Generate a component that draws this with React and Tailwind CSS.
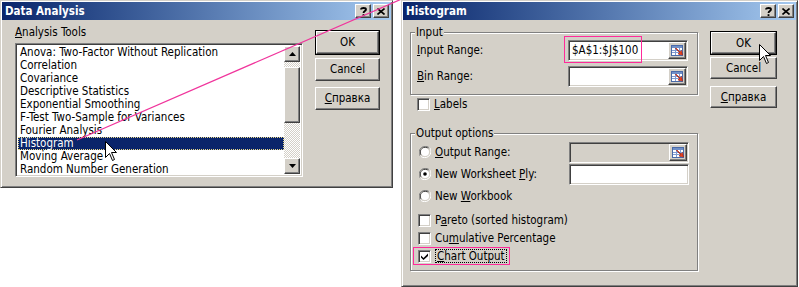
import React from "react";

const raised =
  "border border-t-white border-l-white border-b-[#404040] border-r-[#404040] shadow-[inset_-1px_-1px_0_#808080]";
const sunken =
  "border border-t-[#808080] border-l-[#808080] border-b-white border-r-white shadow-[inset_1px_1px_0_#404040,inset_-1px_-1px_0_#d4d0c8]";

function TitleBar({ title }) {
  return (
    <div className="h-[18px] flex items-center justify-between bg-gradient-to-r from-[#0a246a] to-[#a6caf0] pl-[3px] pr-[2px]">
      <span className="text-white font-bold text-[11.5px]">{title}</span>
      <div className="flex items-center">
        <div className={`${raised} w-[16px] h-[14px] bg-[#d4d0c8] flex items-center justify-center`}>
          <svg width="7" height="9" viewBox="0 0 7 9">
            <path d="M1 2.5 C1 0.5 6 0.5 6 2.5 C6 4 3.5 4 3.5 6" fill="none" stroke="black" strokeWidth="1.8" />
            <rect x="2.6" y="7.2" width="1.8" height="1.8" fill="black" />
          </svg>
        </div>
        <div className={`${raised} w-[16px] h-[14px] bg-[#d4d0c8] flex items-center justify-center ml-[2px]`}>
          <svg width="8" height="7" viewBox="0 0 8 7">
            <path d="M0.5 0.5 L7.5 6.5 M7.5 0.5 L0.5 6.5" stroke="black" strokeWidth="1.6" />
          </svg>
        </div>
      </div>
    </div>
  );
}

function Button({ children, def, className = "" }) {
  const inner = (
    <div className={`${raised} bg-[#d4d0c8] h-full w-full flex items-center justify-center text-black`}>
      {children}
    </div>
  );
  if (def) {
    return <div className={`border border-black ${className}`}>{inner}</div>;
  }
  return <div className={className}>{inner}</div>;
}

function Cursor({ className }) {
  return (
    <svg className={className} width="13" height="21" viewBox="0 0 13 21">
      <path
        d="M0.5 0.5 L0.5 16.5 L4.5 12.5 L7.5 19.5 L9.5 18.5 L6.5 11.5 L11.5 11.5 Z"
        fill="white"
        stroke="black"
        strokeWidth="1"
        strokeLinejoin="miter"
      />
    </svg>
  );
}

function RangeIcon() {
  return (
    <div className={`${raised} w-[18px] h-[17px] bg-[#d4d0c8] flex items-center justify-center`}>
      <svg width="13" height="11" viewBox="0 0 13 11">
        <rect x="0.5" y="0.5" width="11" height="10" fill="white" stroke="#4a6aa8" />
        <rect x="1" y="1" width="10" height="2" fill="#6f8fc8" />
        <path d="M1 5.5 H11 M1 7.5 H11 M4.5 3 V10 M8.5 3 V10" stroke="#7f9ad0" strokeWidth="1" />
        <path d="M5 3 L9 7 L10.5 5.5 L11.5 10 L7 9 L8.5 7.5 L4.5 3.5 Z" fill="#e8401c" stroke="#a01808" strokeWidth="0.6" />
      </svg>
    </div>
  );
}

function Field({ children, range, disabled }) {
  return (
    <div
      className={`${sunken} w-[120px] h-[21px] ${disabled ? "bg-[#d4d0c8]" : "bg-white"} flex items-center justify-between pl-[3px] pr-[1px]`}
    >
      <span>{children}</span>
      {range && <RangeIcon />}
    </div>
  );
}

function Checkbox({ checked }) {
  return (
    <div className={`${sunken} w-[13px] h-[13px] bg-white flex items-center justify-center shrink-0`}>
      {checked && (
        <svg width="7" height="7" viewBox="0 0 7 7">
          <path d="M0 2.5 L2.5 5 L7 0.5 L7 3 L2.5 7 L0 4.6 Z" fill="black" />
        </svg>
      )}
    </div>
  );
}

function Radio({ checked }) {
  return (
    <svg width="12" height="12" viewBox="0 0 12 12" className="shrink-0">
      <path d="M11 2.5 A5.5 5.5 0 0 0 1.5 10.5" fill="none" stroke="#808080" />
      <path d="M10 3 A4.5 4.5 0 0 0 2.5 9.5" fill="none" stroke="#404040" />
      <path d="M1 9.5 A5.5 5.5 0 0 0 10.5 1.5" fill="none" stroke="white" />
      <path d="M2 9 A4.5 4.5 0 0 0 9 2" fill="none" stroke="#d4d0c8" />
      <circle cx="6" cy="6" r="4" fill="white" />
      {checked && <circle cx="6" cy="6" r="1.8" fill="black" />}
    </svg>
  );
}

const tools = [
  "Anova: Two-Factor Without Replication",
  "Correlation",
  "Covariance",
  "Descriptive Statistics",
  "Exponential Smoothing",
  "F-Test Two-Sample for Variances",
  "Fourier Analysis",
  "Histogram",
  "Moving Average",
  "Random Number Generation",
];

function ScrollArrow({ up }) {
  return (
    <div className={`${raised} w-[16px] h-[16px] bg-[#d4d0c8] flex items-center justify-center`}>
      <svg width="7" height="4" viewBox="0 0 7 4">
        {up ? <path d="M3.5 0 L7 4 L0 4 Z" fill="black" /> : <path d="M0 0 L7 0 L3.5 4 Z" fill="black" />}
      </svg>
    </div>
  );
}

function DataAnalysis() {
  return (
    <div className="w-[393px] h-[188px] shrink-0 bg-[#d4d0c8] border border-t-[#d4d0c8] border-l-[#d4d0c8] border-b-[#404040] border-r-[#404040] shadow-[inset_1px_1px_0_#fff,inset_-1px_-1px_0_#808080] p-[1px] flex flex-col">
      <TitleBar title="Data Analysis" />
      <div className="flex">
        <div className="ml-[13px] mt-[6px] flex flex-col">
          <div className="h-[13px]">
            <u>A</u>nalysis Tools
          </div>
          <div className={`${sunken} mt-[4px] w-[288px] h-[134px] bg-white flex p-[2px]`}>
            <div className="flex-1 flex flex-col">
              {tools.map((t) =>
                t === "Histogram" ? (
                  <div
                    key={t}
                    className="h-[13px] bg-[#0a246a] text-white pl-[1px] border border-dotted border-[#e8d888] leading-[11px]"
                  >
                    {t}
                  </div>
                ) : (
                  <div key={t} className="h-[13px] pl-[2px] whitespace-nowrap">
                    {t}
                  </div>
                )
              )}
            </div>
            <div className="w-[16px] flex flex-col">
              <ScrollArrow up />
              <div className="h-[5px] bg-[repeating-conic-gradient(#ffffff_0_25%,#d4d0c8_0_50%)] bg-[length:2px_2px]" />
              <div className={`${raised} h-[56px] bg-[#d4d0c8]`} />
              <div className="flex-1 bg-[repeating-conic-gradient(#ffffff_0_25%,#d4d0c8_0_50%)] bg-[length:2px_2px]" />
              <ScrollArrow />
            </div>
          </div>
        </div>
        <div className="ml-[12px] mt-[10px] flex flex-col">
          <Button def className="w-[65px] h-[25px]">OK</Button>
          <Button className="w-[65px] h-[23px] mt-[3px]">Cancel</Button>
          <Button className="w-[65px] h-[23px] mt-[6px]">
            <span>
              <u>С</u>правка
            </span>
          </Button>
        </div>
      </div>
    </div>
  );
}

function Group({ label, children, className = "" }) {
  return (
    <div className={`relative border border-[#808080] shadow-[1px_1px_0_#fff,inset_1px_1px_0_#fff] ${className}`}>
      <span className="absolute left-[4px] top-[-7px] bg-[#d4d0c8] px-[1px] leading-[13px]">{label}</span>
      {children}
    </div>
  );
}

function HistogramDialog() {
  return (
    <div className="ml-[8px] w-[397px] h-[287px] shrink-0 bg-[#d4d0c8] border border-t-[#d4d0c8] border-l-[#d4d0c8] border-b-[#404040] border-r-[#404040] shadow-[inset_1px_1px_0_#fff,inset_-1px_-1px_0_#808080] p-[1px] flex flex-col relative">
      <TitleBar title="Histogram" />
      <div className="flex">
        <div className="ml-[7px] mt-[12px] w-[288px] flex flex-col">
          <Group label="Input" className="h-[63px] pl-[6px] pt-[7px]">
            <div className="flex items-center h-[21px]">
              <div className="w-[151px]">
                <u>I</u>nput Range:
              </div>
              <div className="relative">
                <Field range>$A$1:$J$100</Field>
                <div className="absolute left-[-4px] top-[-4px] w-[78px] h-[27px] border border-[#ff2a9a]" />
              </div>
            </div>
            <div className="flex items-center h-[21px] mt-[5px]">
              <div className="w-[151px]">
                <u>B</u>in Range:
              </div>
              <Field range />
            </div>
          </Group>
          <div className="flex items-center h-[16px] mt-[1px] pl-[7px] gap-[4px]">
            <Checkbox />
            <span>
              <u>L</u>abels
            </span>
          </div>
          <Group label="Output options" className="mt-[21px] h-[138px] pt-[7px] pl-[7px]">
            <div className="flex items-center h-[22px]">
              <div className="w-[151px] flex items-center gap-[4px] pl-[1px]">
                <Radio />
                <span>
                  <u>O</u>utput Range:
                </span>
              </div>
              <Field range disabled />
            </div>
            <div className="flex items-center h-[22px]">
              <div className="w-[151px] flex items-center gap-[4px] pl-[1px]">
                <Radio checked />
                <span>
                  New Worksheet <u>P</u>ly:
                </span>
              </div>
              <Field />
            </div>
            <div className="flex items-center h-[22px] gap-[4px] pl-[1px]">
              <Radio />
              <span>
                New <u>W</u>orkbook
              </span>
            </div>
            <div className="flex items-center h-[18px] mt-[4px] gap-[4px]">
              <Checkbox />
              <span>
                P<u>a</u>reto (sorted histogram)
              </span>
            </div>
            <div className="flex items-center h-[18px] gap-[4px]">
              <Checkbox />
              <span>
                Cu<u>m</u>ulative Percentage
              </span>
            </div>
            <div className="relative flex items-center h-[18px] gap-[4px]">
              <Checkbox checked />
              <span className="border border-dotted border-black leading-[12px] px-[1px]">
                <u>C</u>hart Output
              </span>
              <div className="absolute left-[-5px] top-0 w-[97px] h-[18px] border border-[#ff2a9a]" />
            </div>
          </Group>
        </div>
        <div className="ml-[12px] mt-[11px] flex flex-col">
          <Button def className="w-[67px] h-[24px]">OK</Button>
          <Button className="w-[67px] h-[22px] mt-[2px]">Cancel</Button>
          <Button className="w-[67px] h-[22px] mt-[7px]">
            <span>
              <u>С</u>правка
            </span>
          </Button>
        </div>
      </div>
    </div>
  );
}

export default function App() {
  return (
    <div className="relative w-[799px] h-[287px] bg-white overflow-hidden flex items-start text-black text-[11.5px] leading-[13px] font-['DejaVu_Sans_Condensed','Liberation_Sans',sans-serif]">
      <DataAnalysis />
      <HistogramDialog />
      <svg className="absolute left-0 top-0 pointer-events-none" width="799" height="287">
        <line x1="77" y1="140" x2="404" y2="-2" stroke="#f0359c" strokeWidth="1.2" />
      </svg>
      <Cursor className="absolute left-[105px] top-[141px]" />
      <Cursor className="absolute left-[759px] top-[44px]" />
    </div>
  );
}
